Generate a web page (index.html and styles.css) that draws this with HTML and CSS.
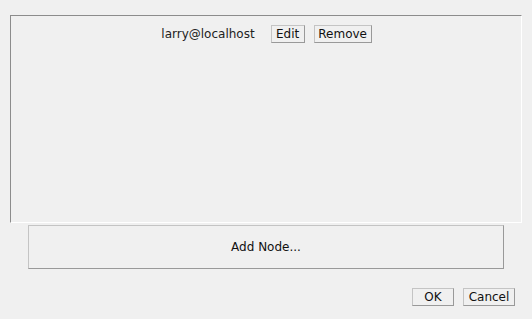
FILE: index.html
```html
<!DOCTYPE html>
<html lang="en">
<head>
    <meta charset="UTF-8">
    <title>Nodes</title>
    <link rel="stylesheet" href="styles.css">
</head>
<body>
    <!-- Список вузлів -->
    <div class="node-panel">
        <div class="node-row">
            <span class="node-name">larry@localhost</span>
            <button class="btn btn-edit">Edit</button>
            <button class="btn btn-remove">Remove</button>
        </div>
    </div>

    <button class="btn add-node">Add Node...</button>

    <div class="dialog-buttons">
        <button class="btn btn-ok">OK</button>
        <button class="btn btn-cancel">Cancel</button>
    </div>
</body>
</html>
```

FILE: styles.css
```css
body {
    font-family: "DejaVu Sans", sans-serif;
    font-size: 12px;
    color: #222;
    background-color: #f0f0f0;
    margin: 0;
    width: 532px;
    height: 319px;
    overflow: hidden;
}
.node-panel {
    box-sizing: border-box;
    margin: 15px 0 0 10px;
    width: 512px;
    height: 208px;
    border-top: 1px solid #8c8c8c;
    border-left: 1px solid #8c8c8c;
    border-right: 1px solid #fff;
    border-bottom: 1px solid #fff;
}
.node-row {
    display: flex;
    justify-content: center;
    align-items: center;
    padding-top: 9px;
    padding-left: 1px;
}
.node-name {
    margin-right: 16px;
}
.btn {
    box-sizing: border-box;
    font-family: "DejaVu Sans", sans-serif;
    font-size: 12px;
    color: #111;
    background-color: #f0f0f0;
    border-top: 1px solid #c4c4c4;
    border-left: 1px solid #c4c4c4;
    border-right: 1px solid #999;
    border-bottom: 1px solid #999;
    height: 18px;
    padding: 0;
    margin: 0;
    line-height: 16px;
}
.btn-edit {
    width: 34px;
}
.btn-remove {
    width: 58px;
    margin-left: 9px;
}
.add-node {
    display: block;
    margin: 2px 0 0 28px;
    width: 476px;
    height: 44px;
    font-size: 12px;
}
.dialog-buttons {
    display: flex;
    justify-content: flex-end;
    gap: 9px;
    margin: 19px 17px 0 0;
}
.btn-ok {
    width: 42px;
}
.btn-cancel {
    width: 52px;
}
```
